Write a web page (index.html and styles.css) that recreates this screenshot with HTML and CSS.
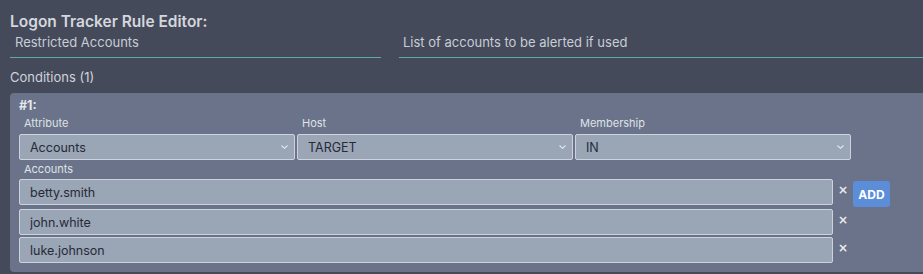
FILE: index.html
```html
<!DOCTYPE html>
<html lang="en">

<head>
    <meta charset="UTF-8" />
    <title>Logon Tracker Rule Editor</title>
    <link rel="stylesheet" href="styles.css">
</head>

<body>
    <h1 class="title">Logon Tracker Rule Editor:</h1>

    <div class="meta">
        <input class="meta-name" type="text" value="Restricted Accounts" />
        <input class="meta-desc" type="text" value="List of accounts to be alerted if used" />
    </div>

    <div class="section-label">Conditions (1)</div>

    <div class="condition">
        <div class="condition-num">#1:</div>

        <div class="fields">
            <div class="field">
                <label>Attribute</label>
                <select>
                    <option>Accounts</option>
                </select>
            </div>
            <div class="field">
                <label>Host</label>
                <select>
                    <option>TARGET</option>
                </select>
            </div>
            <div class="field">
                <label>Membership</label>
                <select>
                    <option>IN</option>
                </select>
            </div>
        </div>

        <label class="values-label">Accounts</label>
        <div class="values">
            <div class="value-row">
                <input type="text" value="betty.smith" />
                <span class="remove">×</span>
                <button class="add-btn">ADD</button>
            </div>
            <div class="value-row">
                <input type="text" value="john.white" />
                <span class="remove">×</span>
            </div>
            <div class="value-row">
                <input type="text" value="luke.johnson" />
                <span class="remove">×</span>
            </div>
        </div>
    </div>
</body>

</html>
```

FILE: styles.css
```css
body {
    font-family: Inter, 'Noto Sans', sans-serif;
    background: #454a5b;
    color: #d6d9df;
    margin: 0;
    padding: 13px 0 0 10px;
    overflow: hidden;
}

.title {
    font-size: 15.5px;
    line-height: 18px;
    font-weight: 600;
    color: #d4d7dd;
    margin: 0;
}

.meta {
    display: flex;
    gap: 18px;
}

.meta input {
    font-family: inherit;
    font-size: 13px;
    line-height: 16px;
    color: #c9cdd5;
    background: transparent;
    border: none;
    border-bottom: 1px solid #62a8a8;
    padding: 3px 5px 7px;
    margin: 0;
    outline: none;
    box-sizing: border-box;
    height: 27px;
}

.meta-name {
    width: 371px;
}

.meta-desc {
    flex: 1;
    padding-left: 4px !important;
}

.section-label {
    font-size: 13px;
    line-height: 16px;
    color: #cfd3da;
    margin-top: 11px;
}

.condition {
    background: #6a7389;
    border-radius: 4px 0 0 4px;
    margin-top: 8px;
    padding: 6px 9px 9px;
}

.condition-num {
    font-size: 12.5px;
    line-height: 14px;
    font-weight: 700;
    color: #e4e7ec;
}

.fields {
    display: flex;
    gap: 2px;
    margin-top: 4px;
}

.field {
    width: 276px;
}

.field label,
.values-label {
    display: block;
    font-size: 11px;
    line-height: 13px;
    color: #dfe2e8;
    padding-left: 5px;
    margin-bottom: 4px;
}

select,
.value-row input {
    font-family: inherit;
    font-size: 12.5px;
    color: #262b37;
    background-color: #9aa5b5;
    border: 1px solid #cdd3dc;
    border-radius: 2px;
    height: 26px;
    box-sizing: border-box;
    margin: 0;
    outline: none;
}

select {
    width: 100%;
    padding: 0 10px;
    appearance: none;
    -webkit-appearance: none;
    background-image: url("data:image/svg+xml,%3Csvg xmlns='http://www.w3.org/2000/svg' width='7' height='4'%3E%3Cpath d='M0.5 0.5 L3.5 3.3 L6.5 0.5' fill='none' stroke='%23e4e8ee' stroke-width='1.1'/%3E%3C/svg%3E");
    background-repeat: no-repeat;
    background-position: right 6px center;
}

.values-label {
    margin-top: 3px;
    margin-bottom: 3px;
}

.values {
    display: flex;
    flex-direction: column;
    gap: 2px;
}

.value-row {
    display: flex;
    align-items: flex-start;
}

.value-row input {
    width: 814px;
    padding: 0 10px;
}

.remove {
    width: 20px;
    text-align: center;
    font-size: 12px;
    font-weight: 700;
    line-height: 22px;
    color: #e9ebef;
    font-family: 'DejaVu Sans', sans-serif;
}

.add-btn {
    font-family: inherit;
    font-size: 12px;
    font-weight: 700;
    color: #fff;
    background: #5b8dd9;
    border: none;
    border-radius: 3px;
    height: 26px;
    width: 37px;
    padding: 0;
    margin-top: 2px;
}
```
